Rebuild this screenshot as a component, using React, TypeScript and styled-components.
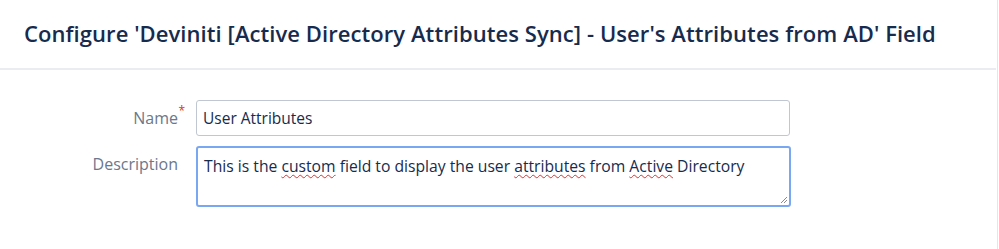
import React from "react";
import styled, { createGlobalStyle } from "styled-components";

const Global = createGlobalStyle`
  html, body { margin: 0; padding: 0; background: #fff; }
  body { font-family: "Open Sans", "Noto Sans", sans-serif; }
`;

const Page = styled.div`
  width: 997px;
  height: 249px;
  border-right: 1px solid #e6e6e6;
  box-sizing: content-box;
  background: #fff;
`;

const Header = styled.header`
  height: 70px;
  box-sizing: border-box;
  padding: 0 0 0 24px;
  display: flex;
  align-items: center;
  border-bottom: 2px solid #ebecf0;
  margin-right: 1px;
`;

const Title = styled.h1`
  margin: 0;
  font-size: 22px;
  font-weight: 600;
  color: #172b4d;
  letter-spacing: 0.07px;
  padding-bottom: 2px;
`;

const Form = styled.div`
  display: grid;
  grid-template-columns: 178px 594px;
  column-gap: 18px;
  row-gap: 10px;
  padding-top: 30px;
`;

const Label = styled.label<{ $top: number }>`
  font-size: 16px;
  color: #6b778c;
  text-align: right;
  padding-top: ${(p) => p.$top}px;
  position: relative;
`;

const Required = styled.span<{ $top: number }>`
  position: absolute;
  right: -7px;
  top: ${(p) => p.$top}px;
  color: #de350b;
  font-size: 12px;
`;

const Input = styled.input`
  box-sizing: border-box;
  width: 594px;
  height: 36px;
  border: 1px solid #c1c7d0;
  border-radius: 3px;
  padding: 0 6px;
  font-family: inherit;
  font-size: 15.5px;
  color: #172b4d;
  outline: none;
  background: #fff;
`;

const TextArea = styled.div`
  box-sizing: border-box;
  width: 595px;
  height: 61px;
  border: 2px solid #7aa7f2;
  border-radius: 3px;
  padding: 8px 6px;
  font-size: 15.7px;
  color: #172b4d;
  position: relative;
  line-height: 20px;
`;

const Misspelled = styled.span`
  text-decoration: underline wavy #e0302e;
  text-decoration-thickness: 1px;
  text-underline-offset: 2px;
`;

const Grip = styled.svg`
  position: absolute;
  right: 1px;
  bottom: 1px;
`;

export default function App() {
  return (
    <>
      <Global />
      <Page>
        <Header>
          <Title>
            Configure 'Deviniti [Active Directory Attributes Sync] - User's Attributes from AD' Field
          </Title>
        </Header>
        <Form>
          <Label $top={7}>
            Name
            <Required $top={2}>*</Required>
          </Label>
          <Input readOnly value="User Attributes" />
          <Label $top={7}>Description</Label>
          <TextArea role="textbox">
            This is the <Misspelled>custom</Misspelled> field to display the user{" "}
            <Misspelled>attributes</Misspelled> from <Misspelled>Active</Misspelled> Directory
            <Grip width="9" height="9" viewBox="0 0 9 9">
              <path d="M8 2 L2 8 M8 5 L5 8" stroke="#8a8a8a" strokeWidth="1" />
            </Grip>
          </TextArea>
        </Form>
      </Page>
    </>
  );
}
